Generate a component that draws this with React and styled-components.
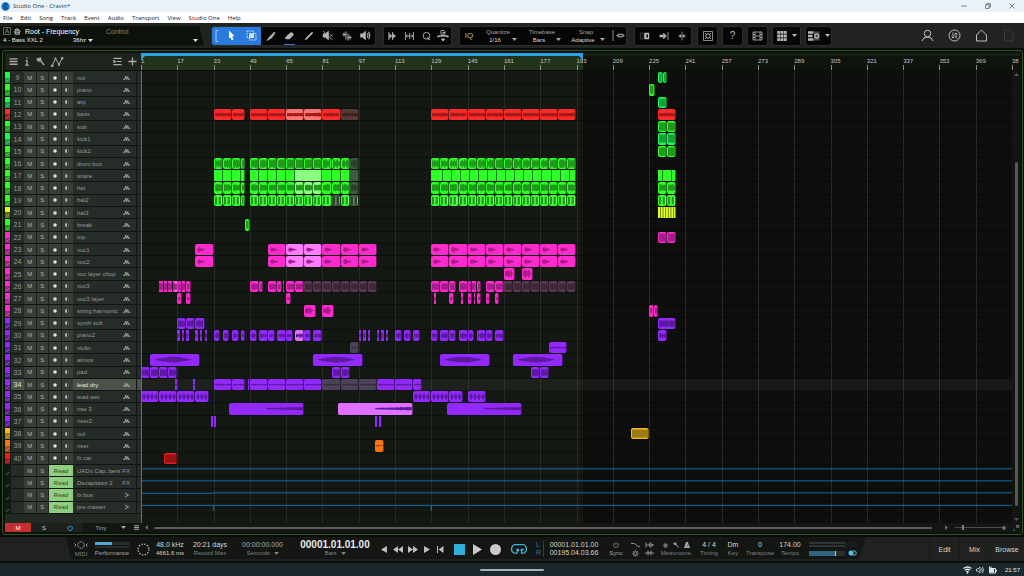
import React, { useState } from 'react';
import styled, { createGlobalStyle, css } from 'styled-components';

const TOTAL_BARS = 384;
const LOOP_END = 195.8;

const PALETTE = {
    green: { base: '#2dff27', wave: '#1f9a1b', light: '#8aff80', muted: '#3d5c3b', mutedWave: '#2a4029' },
    mint: { base: '#14ff52', wave: '#13a23a', light: '#8aff80', muted: '#3d5c3b', mutedWave: '#2a4029' },
    red: { base: '#ff2a2a', wave: '#a31a1a', light: '#ff7676', muted: '#5a3836', mutedWave: '#3c2322' },
    yellow: { base: '#e2ff25', wave: '#5f6b10', light: '#f2ff90', muted: '#5c6036', mutedWave: '#3c4022' },
    pink: { base: '#ff2bcc', wave: '#a81c8b', light: '#ff7dff', muted: '#573a50', mutedWave: '#402638' },
    purple: { base: '#9329ff', wave: '#5c1aa0', light: '#e070ff', muted: '#4b4158', mutedWave: '#352c42' },
    amber: { base: '#f2bb1c', wave: '#9c7a14', light: '#ffe07a', muted: '#5c5236', mutedWave: '#3c3522' },
    orange: { base: '#ff7318', wave: '#b04f12', light: '#ffae7a', muted: '#5c4636', mutedWave: '#3c2c22' },
    crimson: { base: '#ee1b1b', wave: '#981212', light: '#ff7676', muted: '#5a3836', mutedWave: '#3c2322' },
};

// [first bar, length in bars, state]
const run = (start, end, step, state) => {
    const out = [];
    for (let bar = start; bar < end; bar += step) {
        out.push([bar, Math.min(step, end - bar), state]);
    }
    return out;
};

const tail = [[229, 4], [233, 4]];
const voc = [[25, 8], [57, 8], ...run(65, 81, 8, 'light'), ...run(81, 105, 8), ...run(129, 193, 8)];

const TRACKS = [
    { no: 9, name: 'nul', color: 'mint', wave: 'full', clips: [[229, 2], [231, 2]] },
    { no: 10, name: 'piano', color: 'green', wave: 'full', clips: [[225, 2.4]] },
    { no: 11, name: 'arp', color: 'mint', wave: 'full', clips: [[229, 4]] },
    { no: 12, name: 'bass', color: 'red', wave: 'band', clips: [[33, 8], [41, 6], [49, 8], [57, 8], ...run(65, 81, 8, 'light'), [81, 8], [89, 8, 'muted'], ...run(129, 193, 8), [229, 8]] },
    { no: 13, name: 'sub', color: 'green', wave: 'full', clips: tail },
    { no: 14, name: 'kick1', color: 'mint', wave: 'full', clips: tail },
    { no: 15, name: 'kick2', color: 'green', wave: 'drum', clips: tail },
    { no: 16, name: 'drum bus', color: 'green', wave: 'drum', clips: [...run(33, 47, 4), ...run(49, 93, 4), [93, 4, 'muted'], ...run(129, 193, 4)] },
    { no: 17, name: 'snare', color: 'green', wave: 'none', clips: [...run(33, 47, 4), ...run(49, 69, 4), [69, 12, 'light'], ...run(81, 93, 4), [93, 4, 'muted'], [129, 1], ...run(130, 193, 4), [229, 2], [231, 4], [235, 2]] },
    { no: 18, name: 'hat', color: 'green', wave: 'mid', clips: [...run(33, 47, 4), ...run(49, 69, 4), ...run(69, 81, 4, 'light'), ...run(81, 93, 4), [93, 4, 'muted'], ...run(129, 193, 4), ...tail] },
    { no: 19, name: 'hat2', color: 'green', wave: 'bars', clips: [...run(33, 47, 4), ...run(49, 85, 4), [85, 4, 'muted'], [89, 4], [93, 4, 'muted'], ...run(129, 193, 4), ...tail] },
    { no: 20, name: 'hat3', color: 'yellow', wave: 'slits', clips: [[229, 8]] },
    { no: 21, name: 'break', color: 'green', wave: 'full', clips: [[47, 2]] },
    { no: 22, name: 'top', color: 'pink', wave: 'full', clips: tail },
    { no: 23, name: 'voc1', color: 'pink', wave: 'voice', clips: voc },
    { no: 24, name: 'voc2', color: 'pink', wave: 'voice', clips: voc },
    { no: 25, name: 'voc layer chop', color: 'pink', wave: 'chop', clips: [[161, 5], [169, 5]] },
    { no: 26, name: 'voc3', color: 'pink', wave: 'mid', clips: [[9, 1.7], [11, 1.6], [13, 1.8], [15, 0.9], [16, 1, 'light'], [17, 2], [19, 1.5], [21, 2], [49, 4], [53, 2], [57, 4], [61, 2], [63.4, 0.6], [65, 4], [69, 4], ...run(73, 105, 4, 'muted'), [129, 4], [133, 4], [137, 3], [141, 4], [145, 2], [147, 1.6], [149, 2], [153, 4], [157, 4], ...run(161, 193, 4, 'muted')] },
    { no: 27, name: 'voc3 layer', color: 'pink', wave: 'band', clips: [[17, 2], [21, 2], [65, 2], [130, 1], [137, 2], [142, 1], [145, 2], [147.6, 0.5], [149, 2], [153, 2], [157, 2]] },
    { no: 28, name: 'string harmonic', color: 'pink', wave: 'chop', clips: [[73, 5], [81, 5], [225, 2], [227, 2]] },
    { no: 29, name: 'synth soft', color: 'purple', wave: 'mid', clips: [[17, 4], [21, 4], [25, 4], [229, 8]] },
    { no: 30, name: 'piano2', color: 'purple', wave: 'pulse', clips: [[17, 1], [19, 1], [21, 1], [25, 1], [27, 1], [29, 1], [33, 3], [37, 3], [41, 3], [45, 2], [49, 3], [53, 4], [57, 3], [61, 4], [65, 3], [69, 4, 'light'], [73, 3], [77, 4], [97, 1], [99, 1], [101, 1], [105, 1], [107, 1], [109, 1], [113, 3], [117, 3], [121, 3], [129, 3], [133, 4], [137, 3], [141, 4], [145, 3], [149, 4], [153, 3], [157, 4], [229, 4]] },
    { no: 31, name: 'violin', color: 'purple', wave: 'thin', clips: [[93, 4, 'muted'], [181, 8]] },
    { no: 32, name: 'atmos', color: 'purple', wave: 'swell', clips: [[5, 22], [77, 22], [133, 22], [165, 22]] },
    { no: 33, name: 'pad', color: 'purple', wave: 'mid', clips: [...run(1, 17, 4), [85, 4], [89, 4], [173, 4], [177, 4]] },
    { no: 34, name: 'lead dry', color: 'purple', wave: 'thin', selected: true, clips: [[16, 1], [24, 1], [33, 8], [41, 6], [48, 0.8], ...run(49, 81, 8), ...run(81, 105, 8, 'muted'), [105, 8], [113, 8], [121, 4]] },
    { no: 35, name: 'lead wet', color: 'purple', wave: 'beads', clips: [[1, 8], [9, 8], [17, 8], [25, 6], [121, 8], [129, 8], [137, 6], [145, 8]] },
    { no: 36, name: 'rise 3', color: 'purple', wave: 'rise', clips: [[40, 33], [88, 33, 'light'], [136, 33]] },
    { no: 37, name: 'riser2', color: 'purple', wave: 'none', clips: [[32, 0.9], [33, 1], [104, 1], [106, 1]] },
    { no: 38, name: 'nul', color: 'amber', wave: 'full', clips: [[217, 8]] },
    { no: 39, name: 'riser', color: 'orange', wave: 'thin', clips: [[104, 4]] },
    { no: 40, name: 'fx car', color: 'crimson', wave: 'full', clips: [[11, 6]] },
    { name: 'UADx Cap..bers', bus: 'FX', line: 'M0 34H384' },
    { name: 'Decapitator 2', bus: 'FX', line: 'M0 34H384' },
    { name: 'fx bus', bus: 'out', line: 'M0 38H32V34H384' },
    { name: 'pre master', bus: 'out', line: 'M0 30H32V75V30H128V75V30H384' },
];

const noise = (i) => {
    const v = Math.sin(i * 12.9898) * 43758.5453;
    return v - Math.floor(v);
};

const AMPLITUDE = {
    full: (t, n) => 32 + n * 8,
    mid: (t, n) => 20 + n * 14,
    band: (t, n) => 11 + n * 7,
    thin: (t, n) => 3 + n * 7,
    drum: (t, n) => (n > 0.75 ? 18 : 34 + n * 8),
    chop: (t, n) => (t < 0.75 ? 14 + n * 24 : 3),
    pulse: (t, n) => 6 + n * 24,
    voice: (t, n) => (t > 0.08 && t < 0.62 ? Math.min((t - 0.05) * 180, (0.62 - t) * 50) * (0.7 + n * 0.5) : 0),
    swell: (t, n) => (t > 0.06 && t < 0.86 ? 26 * Math.sin(((t - 0.06) / 0.8) * Math.PI) * (0.8 + n * 0.3) : 0),
    rise: (t, n) => (t > 0.5 ? 3 + (t - 0.5) * 18 + n * 5 : 0),
    beads: (t, n, bar) => 30 * Math.abs(Math.sin((bar * Math.PI) / 2)) ** 2,
};

const comb = (length, offset, step, width, top, bottom) => {
    let d = '';
    for (let x = offset; x < length; x += step) {
        d += `M${x} ${top}H${Math.min(length, x + width)}V${bottom}H${x}Z`;
    }
    return d;
};

const wavePath = (kind, start, length) => {
    if (kind === 'bars') return comb(length, 0, 2, 1.3, 18, 82);
    if (kind === 'slits') return comb(length, 0.5, 1.3, 0.4, 0, 100);
    const amp = AMPLITUDE[kind];
    const count = Math.max(3, Math.round(length * 3));
    const upper = [];
    const lower = [];
    for (let i = 0; i <= count; i++) {
        const t = i / count;
        const a = amp(t, noise(start + i), t * length);
        upper.push(`${(t * length).toFixed(2)} ${(50 - a).toFixed(1)}`);
        lower.unshift(`${(t * length).toFixed(2)} ${(50 + a).toFixed(1)}`);
    }
    return `M${upper.concat(lower).join('L')}Z`;
};

const percent = (bars) => `${(bars / TOTAL_BARS) * 100}%`;

function Clip({ clip: [start, length, state], color, wave }) {
    const tone = PALETTE[color];
    const base = state ? tone[state] : tone.base;
    const dark = state === 'muted' ? tone.mutedWave : tone.wave;
    const square = length < 2 || wave === 'none' || wave === 'slits';
    return (
        <ClipBox $color={base} $narrow={length < 2} $square={square} style={{ left: percent(start - 1), width: percent(length) }}>
            {wave !== 'none' && (
                <svg viewBox={`0 0 ${length} 100`} preserveAspectRatio='none'>
                    <path d={wavePath(wave, start, length)} fill={dark} />
                    {wave === 'bars' && <path d={comb(length, 1.4, 2, 0.5, 14, 86)} fill='#c8ffc0' opacity='.5' />}
                </svg>
            )}
        </ClipBox>
    );
}

function Icon({ w = 10, h = 10, box = '0 0 20 20', children }) {
    return (
        <svg width={w} height={h} viewBox={box} fill='none' stroke='currentColor' strokeWidth='2' aria-hidden='true'>
            {children}
        </svg>
    );
}

const Wave = () => (
    <Icon w={7} h={6} box='0 0 14 12'>
        <path d='M0 10L2.500 7L3.500 9L5.500 2L7 9L9.500 3L10.500 9L11.500 7L14 10' strokeWidth='1.600' />
    </Icon>
);

const BusOut = () => (
    <Icon w={6} h={6} box='0 0 14 14'>
        <path d='M2 3H6L9 7H13M2 11H6L9 7M4 7H9' strokeWidth='1.500' />
    </Icon>
);

const Caret = () => (
    <svg width='5' height='3' viewBox='0 0 10 6' fill='currentColor' aria-hidden='true'><path d='M0 0H10L5 6Z' /></svg>
);

function TrackRow({ track }) {
    return (
        <Row $selected={track.selected}>
            <Swatch $color={track.color ? PALETTE[track.color] : null}>
                <svg viewBox='0 0 10 10' width='5' height='5'><path d='M1 8L3 4L5 7L7 2L9 5' stroke='#ffffff55' fill='none' /></svg>
            </Swatch>
            <Number>{track.no}</Number>
            <Switches>
                <RowButton aria-label={`Mute ${track.name}`}>M</RowButton>
                <RowButton aria-label={`Solo ${track.name}`}>S</RowButton>
                {track.bus ? (
                    <ReadButton>Read</ReadButton>
                ) : (
                    <>
                        <RowButton aria-label={`Record ${track.name}`}>
                            <svg width='4' height='4' viewBox='0 0 4 4'><circle cx='2' cy='2' r='1.8' fill='#dde1dd' /></svg>
                        </RowButton>
                        <RowButton aria-label={`Monitor ${track.name}`}>
                            <svg width='5' height='4' viewBox='0 0 10 8'>
                                <path d='M4 0A4 4 0 0 0 4 8Z' fill='#b4bab4' />
                                <path d='M5.500 1A3.500 3.500 0 0 1 5.500 7' fill='none' stroke='#7d837d' />
                            </svg>
                        </RowButton>
                    </>
                )}
            </Switches>
            <Name>
                <span>{track.name}</span>
                {track.bus === 'FX' ? <small>FX</small> : track.bus ? <BusOut /> : <Wave />}
            </Name>
            <RowEdge />
        </Row>
    );
}

function Picker({ label, options }) {
    return (
        <PickerBox>
            <span>{label}</span>
            <div>
                <select aria-label={label}>
                    {options.map((o) => <option key={o}>{o}</option>)}
                </select>
                <Caret />
            </div>
        </PickerBox>
    );
}

const MENUS = ['File', 'Edit', 'Song', 'Track', 'Event', 'Audio', 'Transport', 'View', 'Studio One', 'Help'];

function TopBar() {
    return (
        <>
            <TitleBar>
                <svg width='9' height='9' viewBox='0 0 18 18'>
                    <circle cx='9' cy='9' r='8.500' fill='#1f7fd6' />
                    <path d='M5 4C8 2 12 3 12 5S6 7 6 9S12 10 12 12S8 15 5 14' stroke='#0b3f83' strokeWidth='2.500' fill='none' />
                </svg>
                <h1>Studio One - Cravin*</h1>
                <WindowControls>
                    <button aria-label='Minimize'><Icon w={6} h={6}><path d='M1 10H19' /></Icon></button>
                    <button aria-label='Restore'><Icon w={6} h={6}><path d='M2 6H14V18H2ZM6 6V2H18V14H14' /></Icon></button>
                    <button aria-label='Close'><Icon w={6} h={6}><path d='M2 2L18 18M18 2L2 18' /></Icon></button>
                </WindowControls>
            </TitleBar>
            <MenuBar>
                {MENUS.map((m) => <button key={m}>{m}</button>)}
            </MenuBar>
        </>
    );
}

function Toolbar() {
    return (
        <Tools>
            <ParamPanel>
                <ParamLine>
                    <Icon w={8} h={8} box='0 0 16 16'><path d='M1 1H15V15H1ZM4 13L8 3L12 13M5.500 9.500H10.500' strokeWidth='1.300' stroke='#8d918d' /></Icon>
                    <Icon w={8} h={8} box='0 0 16 16'><path d='M3 8L5 14H12L14 7M5 8V4M8 8V2M11 8V4M4 10H13' strokeWidth='2.500' stroke='#a5a9a5' /></Icon>
                    <strong>Root - Frequency</strong>
                    <em>Control</em>
                </ParamLine>
                <ParamLine $small>
                    <b>4 - Bass XXL 2</b>
                    <span>36hz</span>
                    <Caret />
                    <i><Caret /></i>
                </ParamLine>
            </ParamPanel>
            <ToolGroup $gap={9}>
                <BlueTools>
                    <ToolButton aria-label='Range bracket' $w={9}><Icon w={4} h={12} box='0 0 8 24'><path d='M7 1H2V23H7' strokeWidth='1.500' /></Icon></ToolButton>
                    <ToolButton aria-label='Arrow' $w={21}>
                        <svg width='9' height='11' viewBox='0 0 18 22'><path d='M4 1L15 12L10.500 13L13 19L9.500 20.500L7 14.500L4 17Z' fill='#fff' /></svg>
                    </ToolButton>
                    <ToolButton aria-label='Range' $w={19}>
                        <Icon w={11} h={11} box='0 0 22 22'><path d='M2 2H15V15H2ZM7 7H20V20H7Z' strokeWidth='1.800' strokeDasharray='3 1.500' /><path d='M8 8H15V15H8Z' fill='#cfe0ff' /></Icon>
                    </ToolButton>
                </BlueTools>
                <ToolButton aria-label='Split'><Icon><path d='M2 19L7 12L17 2L18 4L11 14Z' fill='currentColor' strokeWidth='1.500' /></Icon></ToolButton>
                <ToolButton aria-label='Eraser' $active><Icon w={11} h={10}><path d='M2 13L11 4Q13 2 16 4T17 9L10 16H4Q1 16 2 13Z' fill='currentColor' strokeWidth='1' /></Icon></ToolButton>
                <ToolButton aria-label='Paint'><Icon><path d='M2 18L4 14L16 2L18 4L6 16Z' fill='currentColor' strokeWidth='1' /></Icon></ToolButton>
                <ToolButton aria-label='Mute'><Icon w={11} h={11}><path d='M2 7H6L12 2V18L6 13H2Z' fill='currentColor' strokeWidth='1' /><path d='M2 2L19 18' strokeWidth='1.500' /><path d='M15 8L19 12M19 8L15 12' strokeWidth='1.500' /></Icon></ToolButton>
                <ToolButton aria-label='Bend'><Icon><path d='M8 1V17M12 5V19M1 7H8M12 13H19M4 3V11M16 9V17' strokeWidth='2' /></Icon></ToolButton>
                <ToolButton aria-label='Listen'><Icon w={11} h={11}><path d='M1 7H5L10 2V18L5 13H1Z' fill='currentColor' strokeWidth='1' /><path d='M13 6Q16 10 13 14M15.500 3.500Q20 10 15.500 16.500' /></Icon></ToolButton>
            </ToolGroup>
            <ToolGroup $gap={9}>
                <ToolButton aria-label='Strip silence' $w={17}><Icon w={9} h={10}><path d='M2 1V19M10 1V19' /><path d='M3 5L9 10L3 15ZM11 5L17 10L11 15Z' fill='currentColor' strokeWidth='1' /></Icon></ToolButton>
                <ToolButton aria-label='Stretch' $w={17}><Icon w={11} h={10}><path d='M2 2V18M18 2V18M3 10H17M10 4V16M6 7L3 10L6 13M14 7L17 10L14 13' strokeWidth='1.600' /></Icon></ToolButton>
                <ToolButton aria-label='Quantize' $w={17}><Icon w={9} h={10}><circle cx='10' cy='9.500' r='7.500' /><path d='M12 13L17 19' strokeWidth='2.500' /></Icon></ToolButton>
                <ToolButton aria-label='Group' $w={16}><Icon w={12} h={12} box='0 0 24 24'><path d='M8 1H14L16 3V8H8ZM11 5H16' strokeWidth='1.800' /><path d='M1 14Q4 11 12 11T23 14' strokeWidth='3.500' /><path d='M9 18H15L12 22Z' fill='currentColor' /></Icon></ToolButton>
            </ToolGroup>
            <ToolGroup $gap={9}>
                <ToolButton aria-label='Input quantize' $w={18}><span>IQ</span></ToolButton>
                <Picker label='Quantize' options={['1/16', '1/8', '1/4']} />
                <Picker label='Timebase' options={['Bars', 'Seconds']} />
                <Picker label='Snap' options={['Adaptive', 'Bar']} />
                <ToolButton aria-label='Snap to grid' $w={16}><Icon w={13} h={11} box='0 0 26 22'><path d='M2 0V22' strokeWidth='1.500' /><path d='M9 11H12M22 11H25M12 8.500H22V13.500H12Z' strokeWidth='2' /></Icon></ToolButton>
            </ToolGroup>
            <ToolGroup $gap={7}>
                <ToolButton aria-label='Ripple' $w={19}><Icon><path d='M1 4H6V16H1Z' strokeWidth='1' opacity='.5' /><path d='M9 4H18V16H9Z' fill='currentColor' strokeWidth='1' /><path d='M13 7H16V13H13Z' fill='#050605' stroke='none' /></Icon></ToolButton>
                <ToolButton aria-label='Autoscroll' $w={19}><Icon><path d='M1 10H9' strokeWidth='5' /><path d='M9 4L15 10L9 16Z' fill='currentColor' strokeWidth='1' /><path d='M18 2V18' strokeWidth='1.500' /></Icon></ToolButton>
                <ToolButton aria-label='Cursor follows' $w={18}><Icon><path d='M10 1V19' strokeWidth='1.500' /><path d='M3 10H7M13 10H17' /><path d='M6 7L9 10L6 13ZM14 7L11 10L14 13Z' fill='currentColor' strokeWidth='1' /></Icon></ToolButton>
            </ToolGroup>
            <ToolGroup $gap={6}>
                <ToolButton aria-label='Macros'><Icon><path d='M1 1H19V19H1Z' strokeWidth='1.500' /><circle cx='10' cy='10' r='4.500' /><path d='M4 4L7 7M16 4L13 7M4 16L7 13M16 16L13 13' strokeWidth='1.500' /></Icon></ToolButton>
            </ToolGroup>
            <ToolGroup $gap={6}><ToolButton aria-label='Help' $big>?</ToolButton></ToolGroup>
            <ToolGroup $gap={6}>
                <ToolButton aria-label='Video'><Icon w={11} h={10} box='0 0 22 20'><path d='M2 2H20V18H2ZM6 2V18M16 2V18M6 10H16M2 7H6M2 13H6M16 7H20M16 13H20' strokeWidth='1.600' /></Icon></ToolButton>
            </ToolGroup>
            <ToolGroup $gap={6}>
                <ToolButton aria-label='Grid view' $w={27}><Icon w={10} h={10} box='0 0 21 21'><path d='M3.500 0V21M10.500 0V21M17.500 0V21' strokeWidth='6' strokeDasharray='6 1.500' /></Icon><Caret /></ToolButton>
            </ToolGroup>
            <ToolGroup>
                <ToolButton aria-label='Track view' $w={25}><Icon w={12} h={10} box='0 0 24 20'><path d='M0 3H11M0 10H9M0 17H11' strokeWidth='5' /><path d='M12 1H23V19H12Z' fill='#4a4d4a' stroke='none' /><circle cx='17.500' cy='10' r='4' strokeWidth='2.500' /></Icon><Caret /></ToolButton>
            </ToolGroup>
            <AccountLinks>
                <a href='#user' aria-label='Account'><Icon w={13} h={13} box='0 0 26 26'><circle cx='13' cy='9' r='6.500' /><path d='M2 24Q4 16 13 16T24 24' /></Icon></a>
                <a href='#sync' aria-label='Exchange'><Icon w={13} h={13} box='0 0 26 26'><circle cx='13' cy='13' r='11' /><path d='M10 7V18M7 15L10 18L13 15M16 19V8M13 11L16 8L19 11' strokeWidth='1.800' /></Icon></a>
                <a href='#home' aria-label='Start'><Icon w={13} h={13} box='0 0 26 26'><path d='M13 2L23 12V24H3V12Z' /></Icon></a>
                <Faint href='#song' aria-label='Song'><Icon w={13} h={13} box='0 0 26 26'><path d='M5 2H15L22 9V24H5Z' /></Icon></Faint>
            </AccountLinks>
        </Tools>
    );
}

function Arrange() {
    const ticks = [];
    for (let bar = 1; bar <= 385; bar += 16) ticks.push(bar);
    const [zoom, setZoom] = useState(7);

    return (
        <Frame>
            <FrameHead>
                <ListTools>
                    <button aria-label='Track list'><Icon w={9} h={9}><path d='M1 4H19M1 10H19M1 16H19' strokeWidth='3' /></Icon></button>
                    <button aria-label='Inspector'><Icon w={6} h={9} box='0 0 12 20'><path d='M6 1V4M6 7V19M3 8H6M2 18H10' strokeWidth='3' /></Icon></button>
                    <button aria-label='Options'><Icon w={9} h={9}><path d='M3 3Q2 8 6 9L10 8L18 18M3 3L7 6L9 2Q12 6 9 9' strokeWidth='3' /></Icon></button>
                    <button aria-label='Automation'><Icon w={13} h={10} box='0 0 26 20'><path d='M2 18L9 3L16 15L22 3' /><path d='M1 16H4V19H1ZM8 2H10V4H8ZM15 14H17V17H15ZM21 1H24V4H21Z' /></Icon></button>
                    <i />
                    <button aria-label='Groups'><Icon w={9} h={9}><path d='M1 3H19M1 17H19M8 10H19' strokeWidth='2.500' /><path d='M2 7L6 10L2 13Z' fill='currentColor' /></Icon></button>
                    <button aria-label='Add track'><Icon w={9} h={9}><path d='M10 1V19M1 10H19' strokeWidth='3' /></Icon></button>
                </ListTools>
                <Ruler>
                    <RulerScale>
                        <LoopRange style={{ width: percent(LOOP_END - 1) }} />
                        {ticks.map((bar) => (
                            <Tick key={bar} style={{ left: percent(bar - 1) }}>{bar === 385 ? '38' : bar}</Tick>
                        ))}
                    </RulerScale>
                </Ruler>
            </FrameHead>
            <FrameBody>
                <TrackList>
                    {TRACKS.map((t) => <TrackRow key={t.no || t.name} track={t} />)}
                </TrackList>
                <Lanes>
                    <LoopShade style={{ width: percent(LOOP_END - 1) }} />
                    {ticks.map((bar) => <GridLine key={bar} style={{ left: percent(bar - 1) }} />)}
                    {TRACKS.map((t) => (
                        <Lane key={t.no || t.name} $selected={t.selected}>
                            {t.clips && t.clips.map((c) => <Clip key={c[0]} clip={c} color={t.color} wave={t.wave} />)}
                            {t.line && (
                                <svg viewBox='0 0 384 100' preserveAspectRatio='none'>
                                    <path d={t.line} stroke='#146aa8' strokeWidth='1' vectorEffect='non-scaling-stroke' fill='none' />
                                </svg>
                            )}
                        </Lane>
                    ))}
                    <Playhead />
                </Lanes>
                <VScroll>
                    <svg width='5' height='3' viewBox='0 0 10 6'><path d='M0 6H10L5 0Z' fill='#555955' /></svg>
                    <VThumb />
                    <svg width='5' height='3' viewBox='0 0 10 6'><path d='M0 0H10L5 6Z' fill='#555955' /></svg>
                </VScroll>
            </FrameBody>
            <FrameFoot>
                <MuteAll>M</MuteAll>
                <FootButton>S</FootButton>
                <FootButton $blue aria-label='Power'><Icon w={6} h={6}><path d='M10 1V9M5 4A8 8 0 1 0 15 4' strokeWidth='3' /></Icon></FootButton>
                <FootSelect>
                    <select aria-label='Track height'><option>Tiny</option><option>Small</option></select>
                    <Caret />
                    <Icon w={5} h={5}><path d='M0 3H20M0 10H20M0 17H20' strokeWidth='4' /></Icon>
                </FootSelect>
                <HScroll>
                    <svg width='3' height='5' viewBox='0 0 6 10'><path d='M6 0V10L0 5Z' fill='#666a66' /></svg>
                    <HThumb />
                    <svg width='3' height='5' viewBox='0 0 6 10'><path d='M0 0V10L6 5Z' fill='#666a66' /></svg>
                </HScroll>
                <ZoomSlider type='range' aria-label='Zoom' min='0' max='48' value={zoom} onChange={(e) => setZoom(e.target.value)} />
                <ZoomEnd />
                <Icon w={7} h={7} box='0 0 14 14'><path d='M6 3H13M6 6H13M1 12H4' strokeWidth='2.500' stroke='#6a6e6a' /></Icon>
            </FrameFoot>
        </Frame>
    );
}

function Transport() {
    return (
        <TransportBar>
            <TransportPanel>
                <Cell $w={18}>
                    <Icon w={14} h={8} box='0 0 28 16'><circle cx='14' cy='8' r='6.500' strokeDasharray='3 1.500' strokeWidth='1.800' /><path d='M1 5L4 8L1 11M27 5L24 8L27 11' strokeWidth='1.500' /></Icon>
                    <Label>MIDI</Label>
                </Cell>
                <Cell $w={44}>
                    <PerfMeter><span /><span /></PerfMeter>
                    <Label $bright>Performance</Label>
                </Cell>
                <Cell $w={18}>
                    <Icon w={13} h={13} box='0 0 26 26'><circle cx='13' cy='13' r='11' strokeDasharray='3 2.760' strokeWidth='2.500' stroke='#b5b8b5' /></Icon>
                </Cell>
                <Cell $w={36}><Value>48.0 kHz</Value><Value $small>4661.6 ms</Value></Cell>
                <Cell $w={44}><Value>20:21 days</Value><Label>Record Max</Label></Cell>
                <Cell $w={61}>
                    <Value $dim>00:00:00.000</Value>
                    <UnitSelect><select aria-label='Secondary time'><option>Seconds</option></select><Caret /></UnitSelect>
                </Cell>
                <Cell $w={84}>
                    <BigTime>00001.01.01.00</BigTime>
                    <UnitSelect><select aria-label='Main time'><option>Bars</option></select><Caret /></UnitSelect>
                </Cell>
                <NavButton aria-label='Previous bar'><svg width='6' height='7' viewBox='0 0 12 14'><path d='M12 0V14L0 7Z' /></svg></NavButton>
                <NavButton aria-label='Rewind'><svg width='10' height='7' viewBox='0 0 20 14'><path d='M10 0V14L0 7ZM20 0V14L10 7Z' /></svg></NavButton>
                <NavButton aria-label='Forward' $wide><svg width='10' height='7' viewBox='0 0 20 14'><path d='M0 0V14L10 7ZM10 0V14L20 7Z' /></svg></NavButton>
                <NavButton $slim aria-label='Next bar'><svg width='6' height='7' viewBox='0 0 12 14'><path d='M0 0V14L12 7Z' /></svg></NavButton>
                <NavButton aria-label='Return to start'><svg width='7' height='7' viewBox='0 0 14 14'><path d='M0 0H2V14H0ZM13 0V14L3 7Z' /></svg></NavButton>
                <PlayButton aria-label='Stop'><svg width='11' height='11' viewBox='0 0 11 11'><path d='M0 0H11V11H0Z' fill='#2fb0dc' /></svg></PlayButton>
                <PlayButton aria-label='Play'><svg width='9' height='11' viewBox='0 0 9 11'><path d='M0 0V11L9 5.500Z' /></svg></PlayButton>
                <PlayButton aria-label='Record'><svg width='11' height='11' viewBox='0 0 11 11'><circle cx='5.500' cy='5.500' r='5.500' /></svg></PlayButton>
                <PlayButton $w={30} aria-label='Loop'>
                    <svg width='18' height='12' viewBox='0 0 36 24' fill='none'>
                        <path d='M8 20A8.500 9 0 0 1 10 3H26A8.500 9 0 0 1 28 20H23L24 13M8 20H14L16 13M12 14L16 12L18 16M21 15L24 12L28 14' stroke='#3fb5de' strokeWidth='2.500' />
                    </svg>
                </PlayButton>
                <LocatorNames><b>L</b><b>R</b></LocatorNames>
                <Cell $w={60}><Value>00001.01.01.00</Value><Value>00195.04.03.66</Value></Cell>
                <Cell $w={24}>
                    <Icon w={6} h={6}><path d='M10 1V9M5 4A8 8 0 1 0 15 4' /></Icon>
                    <Label $bright>Sync</Label>
                </Cell>
                <IconGrid>
                    <Icon w={9} h={6} box='0 0 18 12'><path d='M0 3H6Q9 3 10 6T18 9' strokeWidth='2' /></Icon>
                    <Icon w={9} h={6} box='0 0 18 12'><path d='M2 1V11M2 6H18M9 2V10M12 0V12M15 4V8' strokeWidth='1.800' /></Icon>
                    <Icon w={7} h={7}><circle cx='10' cy='10' r='5' strokeWidth='3' /><path d='M10 0V4M10 16V20M0 10H4M16 10H20M3 3L6 6M14 14L17 17M17 3L14 6M6 14L3 17' /></Icon>
                    <Icon w={9} h={6} box='0 0 18 12'><path d='M0 6H18M6 1V11M12 1V11M6 3L9 6L12 3' strokeWidth='2' /></Icon>
                </IconGrid>
                <Cell $w={40}>
                    <MetronomeIcons>
                        <svg width='5' height='5' viewBox='0 0 10 10'><circle cx='5' cy='5' r='4.500' fill='#6d716d' /></svg>
                        <Icon w={6} h={6}><path d='M3 3Q2 8 6 9L10 8L18 18M3 3L7 6L9 2Q12 6 9 9' strokeWidth='3' /></Icon>
                        <svg width='6' height='6' viewBox='0 0 12 12'><path d='M4 0H8L12 12H0Z' fill='#a5a8a5' /><path d='M6 9L10 2' stroke='#181a18' /></svg>
                    </MetronomeIcons>
                    <Label>Metronome</Label>
                </Cell>
                <Cell $w={26}><Value>4 / 4</Value><Label>Timing</Label></Cell>
                <Cell $w={22}><Value>Dm</Value><Label>Key</Label></Cell>
                <Cell $w={32}><Value>0</Value><Label>Transpose</Label></Cell>
                <Cell $w={28}><Value>174.00</Value><Label>Tempo</Label></Cell>
                <OutMeters>
                    <div><span /><span /></div>
                    <div><span /><span /></div>
                </OutMeters>
                <StereoDot aria-label='Mono'>
                    <svg width='9' height='6' viewBox='0 0 18 12'><circle cx='6' cy='6' r='5' fill='#54bfe6' /><circle cx='12' cy='6' r='4.500' fill='none' stroke='#54bfe6' strokeWidth='2' /></svg>
                </StereoDot>
            </TransportPanel>
            <ViewTabs>
                <button>Edit</button>
                <button>Mix</button>
                <button>Browse</button>
            </ViewTabs>
        </TransportBar>
    );
}

export default function App() {
    return (
        <Shell>
            <GlobalStyle />
            <TopBar />
            <Toolbar />
            <Arrange />
            <Transport />
            <TaskBar>
                <span />
                <Pill />
                <Tray>
                    <Icon w={9} h={8} box='0 0 18 16'><path d='M1 5Q9 -1 17 5M4 8.500Q9 4.500 14 8.500M7 12Q9 10 11 12' strokeWidth='2.500' /><circle cx='9' cy='14' r='1' /></Icon>
                    <Icon w={8} h={8} box='0 0 16 16'><path d='M1 6H4L8 2V14L4 10H1ZM11 5Q13 8 11 11M13 2Q17 8 13 14' strokeWidth='1.500' /></Icon>
                    <Icon w={9} h={8} box='0 0 18 16'><path d='M3 5H15V14H3ZM17 8V11' /><path d='M5 7H11V12H5ZM3 1V5M6 1V5' fill='currentColor' /></Icon>
                    <time>21:57</time>
                </Tray>
            </TaskBar>
        </Shell>
    );
}

const GlobalStyle = createGlobalStyle`
    * {
        box-sizing: border-box;
    }

    body {
        margin: 0;
        background: #0a0c0a;
        font-family: "Liberation Sans", Arial, sans-serif;
        font-size: 6px;
    }

    button, select {
        display: flex;
        align-items: center;
        justify-content: center;
        margin: 0;
        padding: 0;
        border: 0;
        background: none;
        color: inherit;
        font: inherit;
        appearance: none;
    }

    svg {
        display: block;
        flex: none;
    }
`

const Shell = styled.div`
    display: flex;
    flex-direction: column;
    height: 100vh;
    min-height: 560px;
    overflow: hidden;
    color: #b9bdb9;
`

const TitleBar = styled.header`
    display: flex;
    align-items: center;
    height: 12px;
    flex: none;
    padding-left: 1px;
    gap: 3px;
    background: #eaf3fa;
    color: #333;
    font-family: "Open Sans", sans-serif;

    h1 {
        margin: 0;
        font-size: 6px;
        font-weight: 400;
    }
`

const WindowControls = styled.div`
    display: flex;
    margin-left: auto;

    button {
        width: 24px;
        height: 12px;
    }
`

const MenuBar = styled.nav`
    display: flex;
    align-items: center;
    height: 11px;
    flex: none;
    gap: 8px;
    padding-left: 3px;
    background: #fff;
    color: #222;
    font-family: "Open Sans", sans-serif;
`

const Tools = styled.div`
    display: flex;
    align-items: center;
    height: 25px;
    flex: none;
    background: #202320;
    color: #b4b7b4;
`

const ParamPanel = styled.div`
    width: 204px;
    height: 20px;
    margin-right: 8px;
    padding: 1px 6px 0 3px;
    background: #0c120b;
    clip-path: polygon(0 0, 199px 0, 100% 100%, 0 100%);
`

const ParamLine = styled.div`
    display: flex;
    align-items: center;
    height: 9px;
    gap: 2px;
    color: #e4e7e4;
    font-size: ${({ $small }) => ($small ? '6px' : '7px')};

    strong {
        width: 79px;
        margin-left: 2px;
        color: #fff;
        font-weight: 400;
    }

    em {
        color: #808480;
        font-style: normal;
    }

    b {
        width: 68px;
        font-weight: 400;
    }

    i {
        margin-left: auto;
    }
`

const ToolGroup = styled.div`
    display: flex;
    align-items: center;
    height: 18px;
    margin-right: ${({ $gap }) => $gap || 0}px;
    border-radius: 2px;
    background: #050605;
    box-shadow: 0 0 0 1px #2a2d2a;
`

const BlueTools = styled.div`
    display: flex;
    height: 18px;
    border-radius: 2px 0 0 2px;
    background: #2a79dd;
    color: #d5e5ff;
`

const ToolButton = styled.button`
    width: ${({ $w }) => $w || 19}px;
    height: 18px;
    gap: 5px;
    font-size: ${({ $big }) => ($big ? '10px' : '8px')};
    ${({ $active }) => $active && css`
        background: linear-gradient(#2a79dd, #2a79dd) bottom / 11px 1px no-repeat;
    `}
`

const PickerBox = styled.label`
    display: flex;
    flex-direction: column;
    align-items: center;
    width: 44px;
    color: #a2a5a2;
    line-height: 8px;

    div {
        display: flex;
        align-items: center;
        justify-content: flex-end;
        width: 100%;
        gap: 3px;
        padding-right: 5px;
    }

    span {
        padding-right: 4px;
    }

    select {
        width: 28px;
        height: 8px;
        color: #dadcda;
        text-align-last: center;
    }
`

const AccountLinks = styled.nav`
    display: flex;
    gap: 14px;
    margin-left: auto;
    margin-right: 9px;

    a {
        color: #bfc2bf;
    }
`

const Faint = styled.a`
    && {
        color: #3b3e3b;
    }
`

const Frame = styled.main`
    display: flex;
    flex-direction: column;
    flex: 1;
    min-height: 0;
    margin: 2px 1px 2px 2px;
    padding: 2px;
    border: 1px solid #2d5220;
    border-radius: 3px;
    background: #0d120c;
`

const FrameHead = styled.div`
    display: flex;
    height: 18px;
    flex: none;
    border-bottom: 1px solid #090b09;
`

const ListTools = styled.div`
    display: flex;
    align-items: center;
    width: 136px;
    gap: 6px;
    padding: 0 4px;
    background: #1e231e;
    color: #a9ada9;

    i {
        flex: 1;
    }
`

const Ruler = styled.div`
    flex: 1;
    padding-right: 8px;
    overflow: hidden;
    background: linear-gradient(#192017 3px, #0f130e 3px);
`

const RulerScale = styled.div`
    position: relative;
    height: 100%;
`

const LoopRange = styled.div`
    position: absolute;
    inset: 0 auto 0 0;
    border-top: 3px solid #2ba3ea;
    background: #22331c;

    &::before, &::after {
        content: '';
        position: absolute;
        top: 0;
        border: 2px solid transparent;
        border-top-color: #2ba3ea;
    }

    &::before {
        left: 0;
        border-left-color: #2ba3ea;
    }

    &::after {
        right: 0;
        border-right-color: #2ba3ea;
    }
`

const Tick = styled.span`
    position: absolute;
    top: 4px;
    bottom: 0;
    color: #c3c7c3;
    line-height: 8px;

    &::after {
        content: '';
        position: absolute;
        left: 0;
        bottom: 0;
        width: 1px;
        height: 5px;
        background: #8c908c;
    }
`

const FrameBody = styled.div`
    display: flex;
    flex: 1;
    min-height: 0;
`

const rows = css`
    display: grid;
    grid-template-rows: repeat(${TRACKS.length}, minmax(0, 1fr));
    padding: 1px 0 9px;
`

const TrackList = styled.div`
    ${rows}
    width: 136px;
    background: #232923;
`

const Row = styled.div`
    display: grid;
    grid-template-columns: 5px 14px 49px 1fr 5px;
    border-bottom: 1px solid #111511;
    background: ${({ $selected }) => ($selected ? '#4a5349' : '#262c27')};
    color: ${({ $selected }) => ($selected ? '#e6e9e6' : '#969b96')};
`

const Swatch = styled.span`
    display: flex;
    align-items: flex-end;
    background: ${({ $color }) => ($color ? `linear-gradient(${$color.base} 50%, ${$color.wave} 50%)` : '#141814')};
`

const Number = styled.span`
    display: flex;
    align-items: center;
    justify-content: center;
    border-left: 1px solid #151915;
    font-size: 7px;
`

const Switches = styled.div`
    display: grid;
    grid-template-columns: repeat(4, 1fr);
    gap: 1px;
    background: #1d221e;
`

const RowButton = styled.button`
    background: #363e37;
    color: #aeb3ae;
`

const ReadButton = styled.button`
    grid-column: span 2;
    background: #8fcd80;
    color: #2c4528;
`

const Name = styled.div`
    display: flex;
    align-items: center;
    justify-content: space-between;
    min-width: 0;
    padding: 0 6px 0 4px;
    white-space: nowrap;

    small {
        font-size: 6px;
    }

    svg {
        color: #b4b8b4;
    }
`

const RowEdge = styled.span`
    border-left: 1px solid #121612;
`

const Lanes = styled.div`
    ${rows}
    position: relative;
    flex: 1;
    background: #0e0e0d;
    overflow: hidden;
`

const LoopShade = styled.div`
    position: absolute;
    inset: 0 auto 0 0;
    background: #131812;
`

const GridLine = styled.div`
    position: absolute;
    inset: 0 auto 0 auto;
    width: 1px;
    background: #282b28;
`

const Lane = styled.div`
    position: relative;
    border-bottom: 1px solid rgba(0, 0, 0, 0.3);
    background: ${({ $selected }) => ($selected ? 'rgba(255, 255, 255, 0.045)' : 'none')};

    > svg {
        width: 100%;
        height: 100%;
    }
`

const ClipBox = styled.div`
    position: absolute;
    top: 0;
    bottom: 0;
    padding-left: ${({ $narrow }) => ($narrow ? '0' : '1px')};
    border-right: ${({ $narrow }) => ($narrow ? '0' : '1px')} solid rgba(0, 0, 0, 0.5);
    border-radius: ${({ $square }) => ($square ? '0' : '2px')};
    background: ${({ $color }) => $color};
    overflow: hidden;

    svg {
        width: 100%;
        height: 100%;
    }
`

const Playhead = styled.div`
    position: absolute;
    inset: 0 auto 0 0;
    width: 1px;
    background: #6b6f6b;
`

const VScroll = styled.div`
    display: flex;
    flex-direction: column;
    align-items: center;
    width: 8px;
    padding: 2px 0;
    background: #121512;
`

const VThumb = styled.div`
    flex: 1;
    width: 3px;
    margin: 86px 0 12px;
    border-radius: 2px;
    background: #565a56;
`

const FrameFoot = styled.div`
    display: flex;
    align-items: center;
    height: 9px;
    flex: none;
    background: #131613;
`

const FootButton = styled.button`
    width: 26px;
    height: 9px;
    background: #1d211d;
    color: ${({ $blue }) => ($blue ? '#3b9bf0' : '#c3c7c3')};
`

const MuteAll = styled(FootButton)`
    background: #c23030;
    color: #fff;
`

const FootSelect = styled.div`
    display: flex;
    align-items: center;
    width: 58px;
    gap: 8px;
    padding-left: 6px;
    color: #a5a9a5;

    select {
        width: 24px;
        height: 9px;
        text-align-last: center;
    }
`

const HScroll = styled.div`
    display: flex;
    align-items: center;
    flex: 1;
    padding: 0 5px 0 4px;
    gap: 6px;
`

const HThumb = styled.div`
    flex: 1;
    height: 2px;
    margin-right: 7px;
    border-radius: 1px;
    background: #5c605c;
`

const ZoomSlider = styled.input`
    width: 47px;
    height: 6px;
    margin: 0 0 0 2px;
    appearance: none;
    background: linear-gradient(#4a4e4a, #4a4e4a) center / 100% 1px no-repeat;

    &::-webkit-slider-thumb {
        appearance: none;
        width: 2px;
        height: 5px;
        background: #7c807c;
    }
`

const ZoomEnd = styled.span`
    width: 4px;
    height: 4px;
    margin-right: 7px;
    border-radius: 50%;
    background: #6a6e6a;
`

const TransportBar = styled.footer`
    display: flex;
    height: 24px;
    flex: none;
    padding-left: 66px;
    margin-bottom: 2px;
    background: #1f221f;
`

const TransportPanel = styled.div`
    display: flex;
    align-items: center;
    padding: 0 9px 0 6px;
    background: #141614;
    clip-path: polygon(0 0, 100% 0, calc(100% - 7px) 22px, 5px 22px);
`

const Cell = styled.div`
    display: flex;
    flex-direction: column;
    align-items: center;
    width: ${({ $w }) => $w}px;
    line-height: 8px;
    white-space: nowrap;

    > svg {
        margin: 1px 0;
    }
`

const Value = styled.span`
    height: 8px;
    color: ${({ $dim }) => ($dim ? '#a9ada9' : '#d3d6d3')};
    font-size: ${({ $small }) => ($small ? '6px' : '7px')};
`

const Label = styled.span`
    height: 8px;
    color: ${({ $bright }) => ($bright ? '#a5a9a5' : '#80847f')};
`

const BigTime = styled.span`
    height: 8px;
    color: #e8eae8;
    font-size: 10px;
    font-weight: 700;
`

const UnitSelect = styled.div`
    display: flex;
    align-items: center;
    gap: 3px;
    color: #80847f;

    select {
        height: 8px;
        line-height: 8px;
    }
`

const PerfMeter = styled.div`
    display: grid;
    width: 35px;
    height: 8px;
    padding: 1px 0;
    gap: 1px;

    span {
        background: #2a2d2f;
    }

    span:first-child {
        background: linear-gradient(90deg, #4fa6d0 50%, #2a2d2f 50%);
    }
`

const NavButton = styled.button`
    width: ${({ $wide, $slim }) => ($wide ? 16 : $slim ? 12 : 14)}px;
    height: 16px;
    fill: #bdc0bd;
`

const PlayButton = styled.button`
    width: ${({ $w }) => $w || 18}px;
    height: 20px;
    fill: #c9cbc9;

    ${NavButton} + & {
        margin-left: 3px;
    }
`

const LocatorNames = styled.div`
    display: flex;
    flex-direction: column;
    width: 10px;
    padding-left: 2px;
    border-right: 1px solid #3a3d3a;
    color: #3579aa;
    font-size: 7px;
    line-height: 8px;

    b {
        font-weight: 400;
    }
`

const IconGrid = styled.div`
    display: grid;
    grid-template-columns: 14px 14px;
    grid-template-rows: 8px 8px;
    place-items: center;
    color: #8f938f;
`

const MetronomeIcons = styled.div`
    display: flex;
    align-items: center;
    height: 8px;
    gap: 5px;
`

const OutMeters = styled.div`
    display: grid;
    width: 48px;
    gap: 4px;
    margin-left: 5px;

    div {
        display: grid;
        grid-template-columns: 27px 9px;
        height: 5px;
    }

    span {
        background: #2b2e31;
    }

    div:first-child {
        grid-template-columns: 36px 12px;
    }

    div:first-child span {
        background: linear-gradient(#303338 2px, #141614 2px, #141614 3px, #303338 3px);
    }

    div:first-child span + span {
        background: #1b1d1b;
    }

    div + div span:first-child {
        border-right: 1px solid #9fd6ee;
        background: #2f6480;
    }
`

const StereoDot = styled.button`
    align-self: flex-end;
    width: 10px;
    height: 6px;
    margin: 0 0 5px -10px;
`

const ViewTabs = styled.nav`
    display: grid;
    grid-template-columns: 30px 30px 35px;
    margin-left: auto;

    button {
        border-left: 1px solid #191c19;
        color: #d3d6d3;
        font-size: 7px;
    }
`

const TaskBar = styled.div`
    display: grid;
    grid-template-columns: 1fr auto 1fr;
    align-items: center;
    height: 13px;
    flex: none;
    background: #1b292e;
`

const Pill = styled.div`
    width: 64px;
    height: 2px;
    border-radius: 1px;
    background: #a9b1b4;
`

const Tray = styled.div`
    display: flex;
    align-items: center;
    justify-content: flex-end;
    gap: 4px;
    padding-right: 4px;
    color: #e6eaeb;

    time {
        margin-left: 4px;
    }
`
